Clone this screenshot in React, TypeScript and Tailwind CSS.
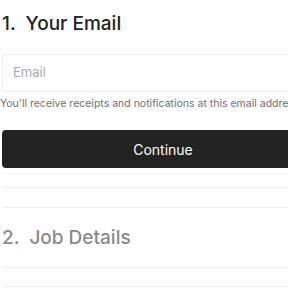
export default function App() {
  return (
    <div className="w-[288px] h-[288px] overflow-hidden bg-white" style={{ fontFamily: 'Inter, "Noto Sans", sans-serif' }}>
      <div className="w-[322px] ml-[2px]">
        <div className="pt-[12px]">
          <h2 className="text-[19px] leading-[24px] font-medium text-[#222] whitespace-pre">1.  Your Email</h2>
          <div className="mt-[18px] h-[38px] border border-[#ececec] rounded-[3px] flex items-center px-[10px]">
            <span className="text-[13px] text-[#a8a8a8]">Email</span>
          </div>
          <p className="mt-[5px] -ml-[2px] text-[10.5px] leading-[14px] text-[#707070] whitespace-nowrap">You'll receive receipts and notifications at this email address.</p>
          <button className="mt-[19px] w-full h-[38px] rounded-[4px] bg-[#222222] text-white text-[14px]">Continue</button>
          <div className="mt-[5px] border-b border-[#f7f7f7]" />
        </div>
        <div className="mt-[13px] border-b border-[#efefef]" />
        <div className="mt-[19px] border-t border-[#efefef] h-[60px] flex items-center">
          <h2 className="text-[19px] leading-[24px] font-medium text-[#8a8a8a] whitespace-pre">2.  Job Details</h2>
        </div>
        <div className="border-t border-[#efefef]" />
        <div className="mt-[18px] border-t border-[#efefef]" />
      </div>
    </div>
  );
}
